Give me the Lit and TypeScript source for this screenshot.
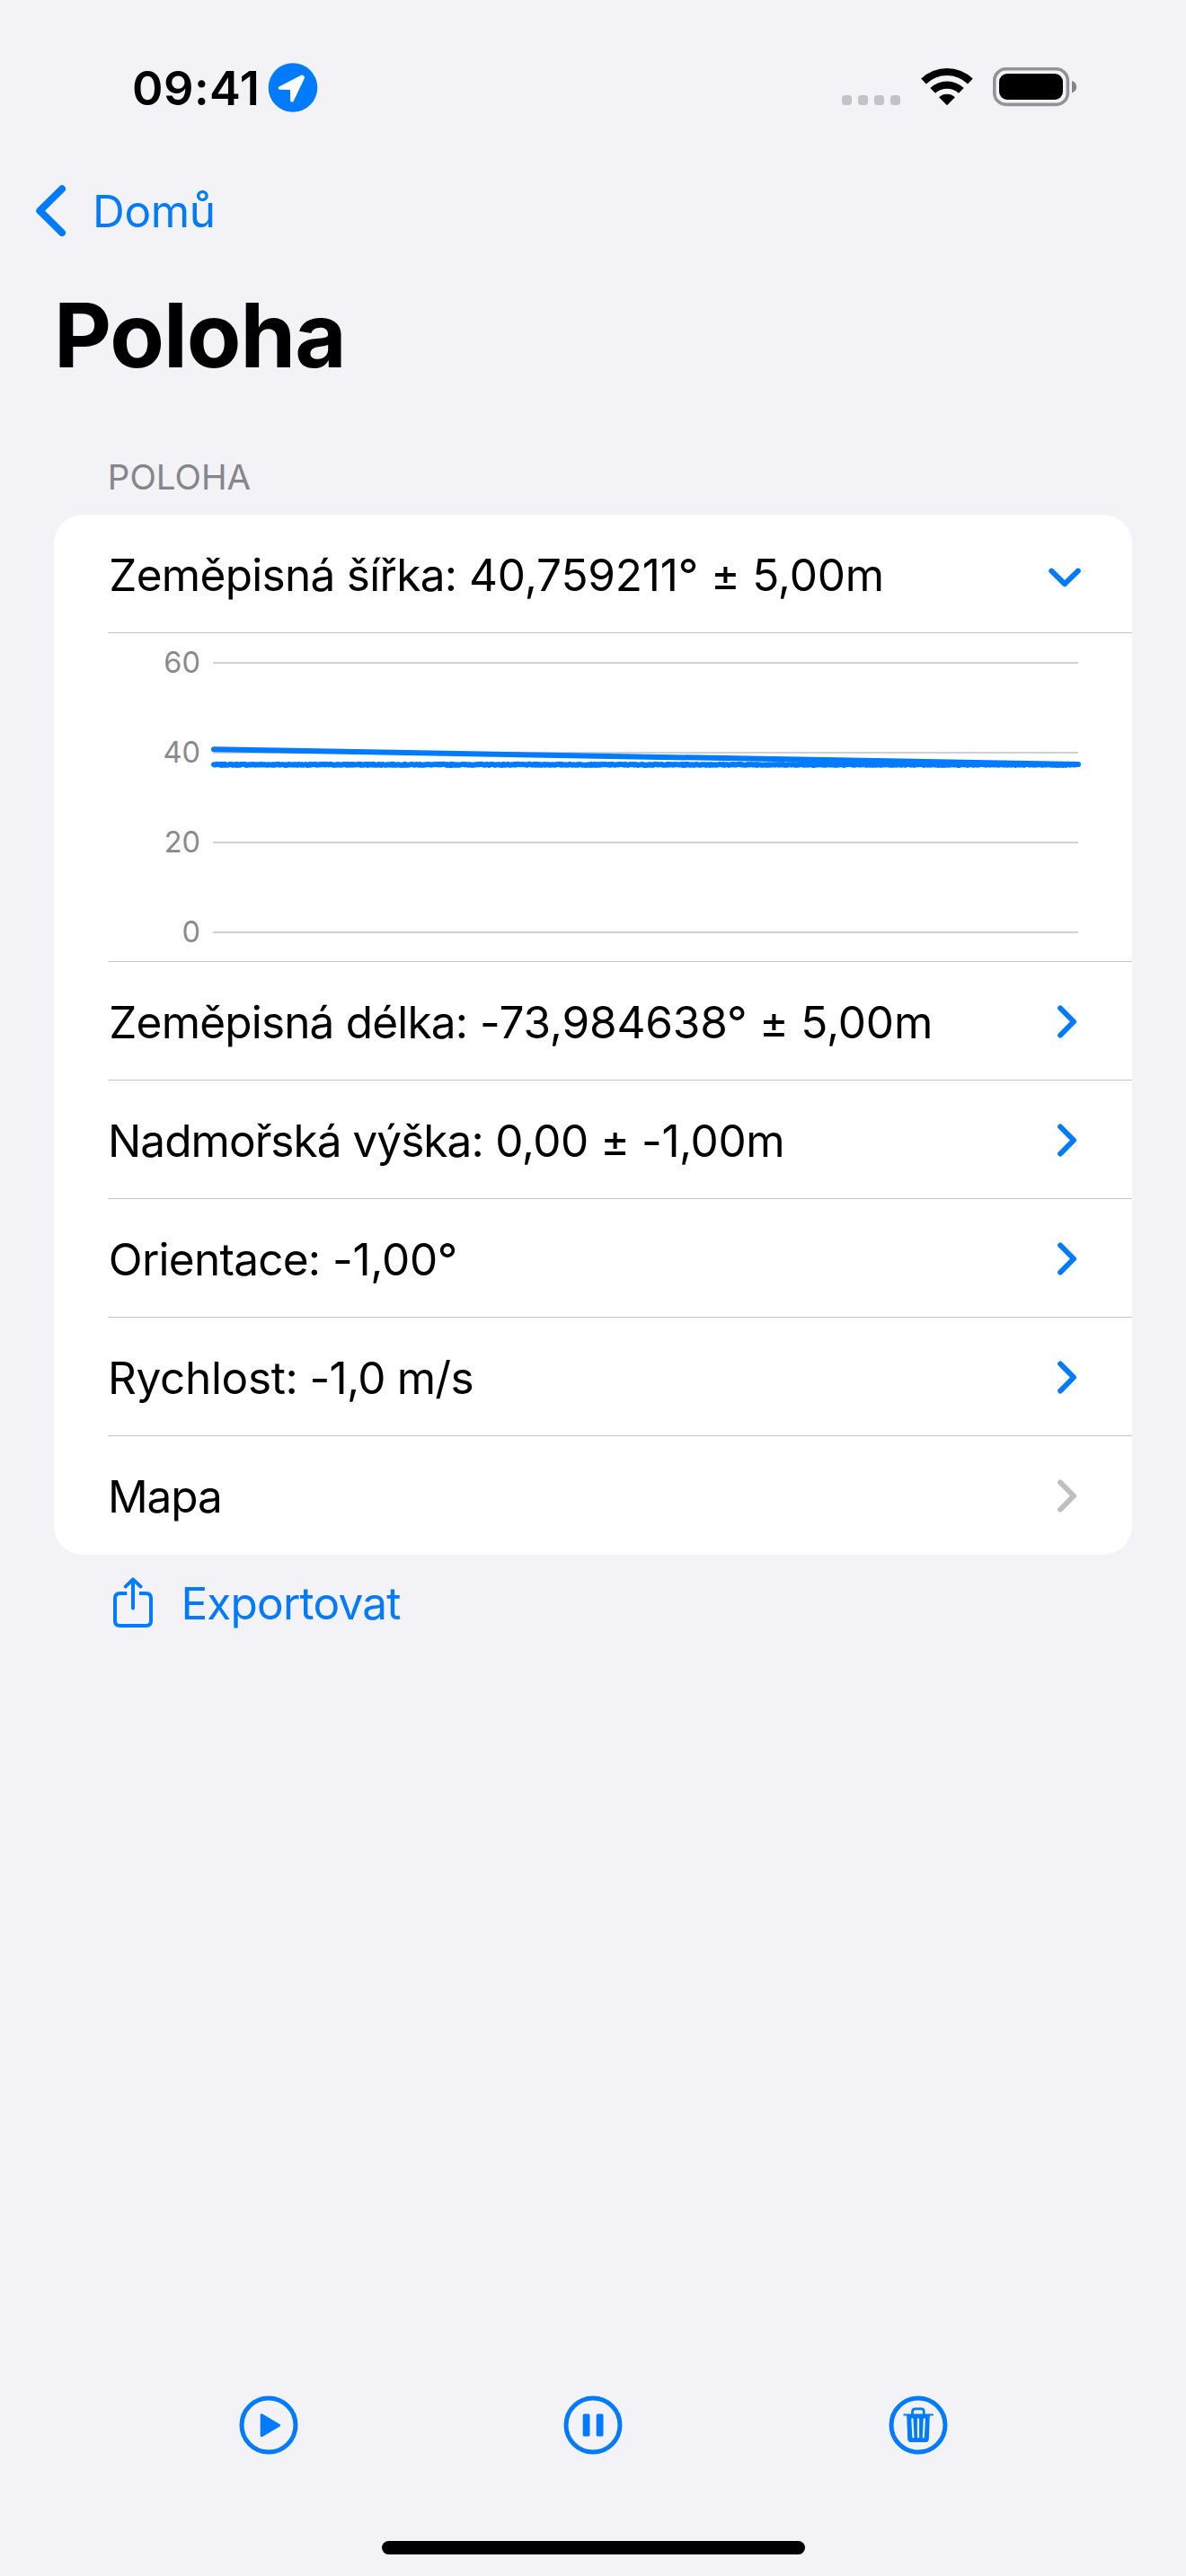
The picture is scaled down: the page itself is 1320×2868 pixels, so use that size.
import { LitElement, html, svg, css } from "lit";
import { customElement, property } from "lit/decorators.js";
import { styleMap } from "lit/directives/style-map.js";

interface Reading {
  label: string;
  value: string;
  labelTracking: number;
  valueTracking: number;
  inset: number;
  chevron: "down" | "right" | "muted";
}

const READINGS: Reading[] = [
  { label: "Zeměpisná šířka:", value: " 40,759211° ± 5,00m", labelTracking: -0.71, valueTracking: -0.17, inset: 1.3, chevron: "down" },
  { label: "Zeměpisná délka:", value: " -73,984638° ± 5,00m", labelTracking: -0.82, valueTracking: -0.17, inset: 1.3, chevron: "right" },
  { label: "Nadmořská výška:", value: " 0,00 ± -1,00m", labelTracking: -0.96, valueTracking: -0.45, inset: 0, chevron: "right" },
  { label: "Orientace:", value: " -1,00°", labelTracking: -0.74, valueTracking: -0.3, inset: 0.8, chevron: "right" },
  { label: "Rychlost:", value: " -1,0 m/s", labelTracking: -0.34, valueTracking: -0.78, inset: 0, chevron: "right" },
  { label: "Mapa", value: "", labelTracking: -1.1, valueTracking: 0, inset: 0, chevron: "muted" },
];

const TICKS = [60, 40, 20, 0];

@customElement("location-chart")
export class LocationChart extends LitElement {
  static styles = css`
    :host {
      display: flex;
      box-sizing: border-box;
      height: 366px;
      margin-left: 60px;
      padding: 32px 59px 0 0;
      border-bottom: 1px solid #c6c6c8;
    }
    .axis {
      width: 103px;
      display: flex;
      flex-direction: column;
      justify-content: space-between;
      align-items: flex-end;
      margin: -20px 14px 0 0;
      height: 341px;
      font-size: 32.5px;
      color: #8a8a8e;
    }
    .tick {
      height: 41px;
      line-height: 41px;
    }
    .plot {
      display: block;
      overflow: visible;
    }
  `;

  private toY(value: number): number {
    return 301 - value * 5;
  }

  private get points(): string {
    const list: string[] = [];
    let seed = 7;
    for (let x = 1; x <= 963; x += 1) {
      seed = (seed * 1103515245 + 12345) % 2147483648;
      const jitter = (seed / 2147483648 - 0.5) * 0.22;
      list.push(`${x},${this.toY(37.33 + jitter).toFixed(2)}`);
    }
    list.push(`1,${this.toY(40.76).toFixed(2)}`);
    return list.join(" ");
  }

  render() {
    return html`
      <div class="axis">${TICKS.map((t) => html`<span class="tick">${t}</span>`)}</div>
      <svg class="plot" width="963" height="302" viewBox="0 0 963 302">
        ${TICKS.map((t) => svg`<rect x="0" y=${this.toY(t) - 1} width="963" height="2" fill="#d1d1d1" />`)}
        <polyline points=${this.points} fill="none" stroke="#007aff" stroke-width="6" stroke-linecap="round" stroke-linejoin="round" />
      </svg>
    `;
  }
}

@customElement("reading-row")
export class ReadingRow extends LitElement {
  static styles = css`
    :host {
      display: block;
      padding-left: 60px;
    }
    .row {
      display: flex;
      align-items: center;
      justify-content: space-between;
      box-sizing: border-box;
      height: 132px;
      padding-right: 56px;
      border-bottom: 1px solid #c6c6c8;
    }
    :host([last]) .row {
      border-bottom-color: transparent;
    }
    .text {
      font-size: 49.5px;
      line-height: 60px;
      padding-top: 3px;
      white-space: pre;
    }
    .icon {
      display: block;
      width: 40px;
      height: 40px;
      fill: none;
      stroke: #007aff;
      stroke-width: 6;
      stroke-linecap: round;
      stroke-linejoin: round;
    }
    .muted {
      stroke: #bfbfbf;
    }
  `;

  @property({ attribute: false }) reading!: Reading;

  render() {
    const r = this.reading;
    return html`
      <div class="row">
        <div class="text" style=${styleMap({ marginLeft: `${r.inset}px` })}><span style=${styleMap({ letterSpacing: `${r.labelTracking}px` })}>${r.label}</span><span style=${styleMap({ letterSpacing: `${r.valueTracking}px` })}>${r.value}</span></div>
        ${r.chevron === "down"
          ? html`<svg class="icon" viewBox="0 0 40 40"><path d="M6.3 16.7 21 31.2 35.8 16.7" /></svg>`
          : html`<svg class="icon ${r.chevron}" viewBox="0 0 40 40"><path d="M16.2 5.5 31 20.5 16.2 35.5" /></svg>`}
      </div>
    `;
  }
}

@customElement("app-root")
export class AppRoot extends LitElement {
  static styles = css`
    :host {
      display: flex;
      flex-direction: column;
      box-sizing: border-box;
      width: 1320px;
      height: 2868px;
      overflow: hidden;
      background: #f2f2f7;
      color: #000;
      font-family: Inter, "Liberation Sans", sans-serif;
    }
    svg {
      display: block;
      flex: none;
    }
    .status {
      display: flex;
      align-items: center;
      height: 104px;
      margin-top: 46px;
      padding-left: 147px;
    }
    .time {
      width: 151px;
      font-size: 52.3px;
      font-weight: 600;
      letter-spacing: 0.5px;
      white-space: nowrap;
    }
    .cells {
      margin-left: 583px;
    }
    .wifi {
      margin-left: 76px;
    }
    .battery {
      margin-left: 22px;
    }
    .nav {
      display: flex;
      align-items: center;
      height: 120px;
      margin-top: 25px;
      padding-left: 36px;
      color: #007aff;
      font-size: 49.5px;
      letter-spacing: -0.3px;
    }
    .back {
      margin-right: 27px;
    }
    .title {
      margin: 18px 0 0 60px;
      font-size: 99px;
      line-height: 120px;
      font-weight: 700;
      letter-spacing: -1px;
    }
    .section {
      margin: 73px 0 17px 119.8px;
      font-size: 38.5px;
      line-height: 50px;
      color: #85858b;
    }
    .card {
      margin: 0 60px;
      background: #fff;
      border-radius: 32px;
      overflow: hidden;
    }
    .export {
      display: flex;
      align-items: center;
      height: 108px;
      padding-left: 124px;
      color: #007aff;
      font-size: 49.5px;
      letter-spacing: -0.8px;
    }
    .share {
      margin-right: 29.4px;
    }
    .toolbar {
      display: flex;
      gap: 295.5px;
      margin: auto 0 96px 265.5px;
    }
    .home {
      flex: none;
      align-self: center;
      width: 471px;
      height: 15px;
      margin-bottom: 24px;
      border-radius: 7.5px;
      background: #000;
    }
  `;

  render() {
    return html`
      <div class="status">
        <div class="time">09:41</div>
        <svg width="56" height="56" viewBox="298 70 56 56">
          <circle cx="326" cy="97.5" r="27.3" fill="#007aff" />
          <path d="M336 85.4 311.4 98 323 98.2Q324.7 98.3 324.8 100L325 112 337.3 86.2Z" fill="#fff" stroke="#fff" stroke-width="3.6" stroke-linejoin="round" />
        </svg>
        <svg class="cells" width="12" height="56" viewBox="937 70 12 56" overflow="visible">
          ${[0, 1, 2, 3].map((i) => svg`<rect x=${937 + i * 18} y="106" width="11" height="11" rx="3.5" fill="#c3c2c8" />`)}
        </svg>
        <svg class="wifi" width="58" height="56" viewBox="1024.5 70 58 56">
          <path d="M1024.7 87.5A41.5 41.5 0 0 1 1082.2 87.5L1076.6 93.4A33.5 33.5 0 0 0 1030.3 93.4Z" />
          <path d="M1034.8 98A27.2 27.2 0 0 1 1072.2 98L1066.5 103.7A19.2 19.2 0 0 0 1040.5 103.7Z" />
          <path d="M1044.6 108.2A13.2 13.2 0 0 1 1062.4 108.2L1053.5 117.2Z" />
        </svg>
        <svg class="battery" width="94" height="56" viewBox="1105 70 94 56">
          <rect x="1106.8" y="76.8" width="81.6" height="39.6" rx="13" fill="none" stroke="#939296" stroke-width="3.6" />
          <rect x="1112" y="82" width="71" height="29" rx="9" />
          <path d="M1193 90Q1198.2 91.8 1198.2 96.7T1193 103.4Z" fill="#858489" />
        </svg>
      </div>

      <div class="nav">
        <svg class="back" width="40" height="64" viewBox="36 203 40 64">
          <path d="M69 210.3 44.3 234.7 69 259.1" fill="none" stroke="#007aff" stroke-width="8" stroke-linecap="round" stroke-linejoin="round" />
        </svg>
        <span>Domů</span>
      </div>

      <div class="title">Poloha</div>
      <div class="section">POLOHA</div>

      <div class="card">
        ${READINGS.map(
          (r, i) => html`
            <reading-row .reading=${r} ?last=${i === READINGS.length - 1}></reading-row>
            ${r.chevron === "down" ? html`<location-chart></location-chart>` : ""}
          `
        )}
      </div>

      <div class="export">
        <svg class="share" width="48" height="60" viewBox="124 1755 48 60" fill="none" stroke="#007aff" stroke-width="4" stroke-linecap="round" stroke-linejoin="round">
          <path d="M141.3 1774H133.5Q128 1774 128 1779.5V1804.5Q128 1810 133.5 1810H162.5Q168 1810 168 1804.5V1779.5Q168 1774 162.5 1774H155" stroke-linecap="butt" />
          <path d="M148 1790.5V1759M139.8 1766.4 148 1758.4 156.5 1766.4" />
        </svg>
        <span>Exportovat</span>
      </div>

      <div class="toolbar">
        <svg width="66" height="66" viewBox="0 0 66 66">
          <circle cx="33" cy="33" r="30" fill="none" stroke="#007aff" stroke-width="5" />
          <path d="M25.2 21.8V44.6L44.6 33.2Z" fill="#007aff" stroke="#007aff" stroke-width="3" stroke-linejoin="round" />
        </svg>
        <svg width="66" height="66" viewBox="0 0 66 66">
          <circle cx="33" cy="33" r="30" fill="none" stroke="#007aff" stroke-width="5" />
          <rect x="21.7" y="20.5" width="7.8" height="25" rx="1.6" fill="#007aff" />
          <rect x="36.7" y="20.5" width="7.8" height="25" rx="1.6" fill="#007aff" />
        </svg>
        <svg width="66" height="66" viewBox="0 0 66 66">
          <circle cx="33" cy="33" r="30" fill="none" stroke="#007aff" stroke-width="5" />
          <path d="M26.5 21V18Q26.5 14.8 29.6 14.8H36.2Q39.3 14.8 39.3 18V21" fill="none" stroke="#007aff" stroke-width="2.7" />
          <path d="M17.3 21.5H49" stroke="#007aff" stroke-width="2.2" stroke-linecap="round" />
          <path d="M20.2 22H45.8L44.8 48.6Q44.6 52 41.4 52H24.6Q21.4 52 21.2 48.6Z" fill="#007aff" />
          <path d="M26.4 26.3 27.4 46.3M33 26.3V46.3M39.8 26.3 38.8 46.3" stroke="#f2f2f7" stroke-width="2.2" stroke-linecap="round" />
        </svg>
      </div>
      <div class="home"></div>
    `;
  }
}
